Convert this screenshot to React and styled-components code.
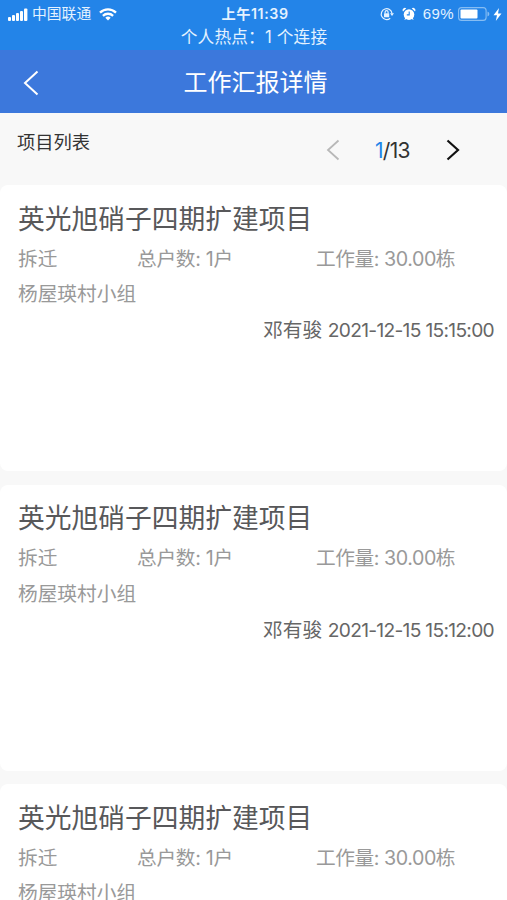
// BASIC
import React from 'react'
import styled, { createGlobalStyle } from 'styled-components'

const GlobalStyle = createGlobalStyle`
	* {
		box-sizing: border-box;
	}
	body {
		margin: 0;
		background: #f8f8f8;
		font-family: Inter, "Noto Sans CJK SC", sans-serif;
	}
`
const Screen = styled.div`
	height: 900px;
	overflow: hidden;
	background: #f8f8f8;
`
const StatusBar = styled.div`
	height: 50px;
	padding: 4px 5px 0 8px;
	background: #2384e8;
	color: #e4f2ff;
`
const StatusRow = styled.div`
	display: grid;
	grid-template-columns: 1fr auto 1fr;
	align-items: center;
	height: 20px;
	font-size: 14.8px;
	line-height: 20px;
`
const StatusGroup = styled.div`
	display: flex;
	align-items: center;
	justify-content: ${props => props.$end ? 'flex-end' : 'flex-start'};
`
const Signal = styled.svg`
	margin-right: 4px;
`
const Wifi = styled.svg`
	margin-left: 8px;
`
const Lock = styled.svg`
	margin-right: 8px;
`
const Alarm = styled.svg`
	margin-right: 7px;
`
const Battery = styled.svg`
	margin: 0 3px 0 4px;
`
const Percent = styled.span`
	font-family: "Liberation Sans", sans-serif;
	font-size: 15px;
	letter-spacing: 0.4px;
`
const Time = styled.div`
	font-size: 14.2px;
	font-weight: 600;
	letter-spacing: 0.6px;
`
const Hotspot = styled.div`
	padding: 1px 2px 0 0;
	font-size: 16.7px;
	line-height: 25px;
	letter-spacing: 0.15px;
	text-align: center;
	white-space: nowrap;
`
const Header = styled.header`
	display: grid;
	grid-template-columns: 60px 1fr 56px;
	align-items: center;
	height: 63px;
	padding-top: 2px;
	background: #3c78dc;
	color: #fff;
`
const Back = styled.svg`
	margin-left: 22px;
`
const Title = styled.h1`
	margin: 0;
	font-size: 24px;
	font-weight: 400;
	line-height: 36px;
	text-align: center;
`
const Toolbar = styled.div`
	display: flex;
	justify-content: space-between;
	height: 72px;
	padding: 16px 47px 0 17px;
	color: #333;
`
const ToolbarLabel = styled.div`
	font-size: 18.3px;
	line-height: 26px;
`
const Pager = styled.div`
	display: flex;
	align-items: center;
	height: 42px;
`
const PageCount = styled.div`
	width: 36px;
	margin: 0 35px;
	padding-top: 1px;
	font-size: 21px;
	letter-spacing: -0.7px;
	white-space: nowrap;
`
const Current = styled.span`
	color: #2384e8;
`
const List = styled.div`
	display: flex;
	flex-direction: column;
	gap: 13.5px;
`
const Card = styled.article`
	flex: none;
	height: 286px;
	padding: 14.6px 13px 0 18px;
	border-radius: 8px;
	background: #fff;
	color: #999;
	font-size: 19.7px;
	line-height: 35.8px;
	white-space: nowrap;
`
const CardTitle = styled.h2`
	margin: 0 0 4px;
	color: #58585a;
	font-size: 26.75px;
	font-weight: 400;
	line-height: 38px;
`
const Facts = styled.div`
	display: grid;
	grid-template-columns: 119px 179px 1fr;
`
const Fact = styled.span`
	letter-spacing: ${props => props.$spacing || 0};
`
const Author = styled.div`
	color: #666;
	text-align: right;
`
const Stamp = styled.span`
	font-size: 19.2px;
	letter-spacing: -0.7px;
`

const reports = [
	{ id: 1, time: '2021-12-15 15:15:00' },
	{ id: 2, time: '2021-12-15 15:12:00' },
	{ id: 3 },
]

const Report = ({ time }) => (
	<Card>
		<CardTitle>英光旭硝子四期扩建项目</CardTitle>
		<Facts>
			<Fact>拆迁</Fact>
			<Fact $spacing="-0.3px">总户数: 1户</Fact>
			<Fact $spacing="-0.45px">工作量: 30.00栋</Fact>
		</Facts>
		<div>杨屋瑛村小组</div>
		{time && <Author>邓有骏 <Stamp>{time}</Stamp></Author>}
	</Card>
)

const App = () => (
	<Screen>
		<GlobalStyle />
		<StatusBar>
			<StatusRow>
				<StatusGroup>
					<Signal width="20" height="13" fill="#fff">
						<rect x="0" y="9" width="3" height="4" rx="1" />
						<rect x="4" y="7" width="3" height="6" rx="1" />
						<rect x="8" y="5" width="3" height="8" rx="1" />
						<rect x="12" y="3" width="3" height="10" rx="1" />
						<rect x="16" y="0.5" width="3.4" height="12.5" rx="1" />
					</Signal>
					中国联通
					<Wifi width="18" height="13" viewBox="0 0 18 13" fill="none" stroke="#fff" strokeWidth="2.3">
						<path d="M1 4.7a11.5 11.5 0 0 1 16 0M3.9 7.8a7.4 7.4 0 0 1 10.2 0" />
						<path d="M9 12.5 6.3 9.8a4 4 0 0 1 5.4 0z" fill="#fff" stroke="none" />
					</Wifi>
				</StatusGroup>
				<Time>上午11:39</Time>
				<StatusGroup $end>
					<Lock width="14" height="14" viewBox="0 0 14 14" fill="none" stroke="#e4f2ff" strokeWidth="1.2">
						<path d="M10.2 11.2A5.4 5.4 0 1 1 12 6.5" />
						<path d="M10 6.2h4L12 9z" fill="#e4f2ff" stroke="none" />
						<rect x="4" y="6.2" width="5.2" height="4" rx="0.5" fill="#e4f2ff" stroke="none" />
						<path d="M5.1 6.5V5.2a1.5 1.5 0 0 1 3 0v1.3" />
					</Lock>
					<Alarm width="14" height="14" viewBox="0 0 14 14" fill="#fff">
						<circle cx="7" cy="7.6" r="5.3" />
						<path d="M1 4.4A2.3 2.3 0 0 1 4.3 1.3zM13 4.4A2.3 2.3 0 0 0 9.7 1.3zM2.3 13l1.2-2.4 1.4 1.2zM11.7 13l-1.2-2.4-1.4 1.2z" />
						<path d="M7.2 4.6v3.3H4.8" fill="none" stroke="#2384e8" strokeWidth="1.1" />
					</Alarm>
					<Percent>69%</Percent>
					<Battery width="32" height="14" fill="none">
						<rect x="0.6" y="0.6" width="27.5" height="12.8" rx="3" stroke="#86bdf3" strokeWidth="1.1" />
						<rect x="2.5" y="2.5" width="17" height="9" rx="1" fill="#fff" />
						<path d="M29.5 4.5a2.6 2.6 0 0 1 0 5z" fill="#86bdf3" />
					</Battery>
					<svg width="9" height="13" fill="#fff">
						<path d="M6 0 0.5 7.3H4L2.8 13 8.5 5.5H5z" />
					</svg>
				</StatusGroup>
			</StatusRow>
			<Hotspot>个人热点：1 个连接</Hotspot>
		</StatusBar>
		<Header>
			<Back width="18" height="26" fill="none" stroke="#fff" strokeWidth="2">
				<path d="M15.5 1.5 3 13l12.5 11.5" />
			</Back>
			<Title>工作汇报详情</Title>
		</Header>
		<Toolbar>
			<ToolbarLabel>项目列表</ToolbarLabel>
			<Pager>
				<svg width="14" height="22" fill="none" stroke="#b8b8b8" strokeWidth="1.8">
					<path d="M12.5 1.5 2 11l10.5 9.5" />
				</svg>
				<PageCount><Current>1</Current>/13</PageCount>
				<svg width="14" height="22" fill="none" stroke="#111" strokeWidth="2.2">
					<path d="M1.5 1.5 12 11 1.5 20.5" />
				</svg>
			</Pager>
		</Toolbar>
		<List>
			{reports.map(report => <Report key={report.id} time={report.time} />)}
		</List>
	</Screen>
)

export default App
